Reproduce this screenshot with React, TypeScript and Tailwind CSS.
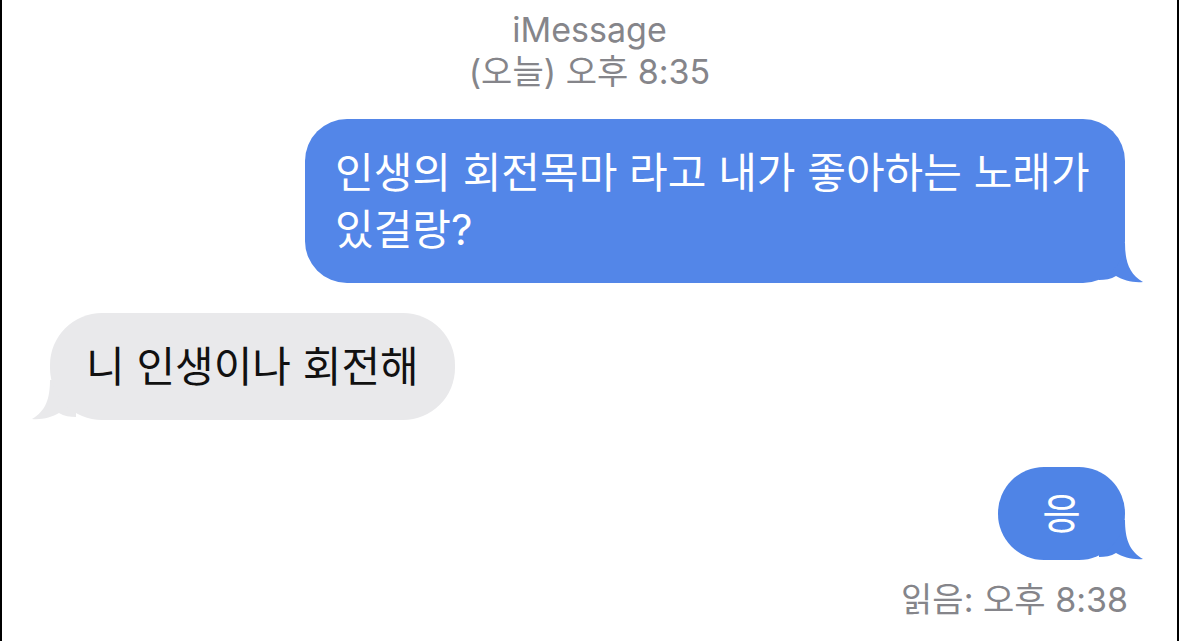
const font = { fontFamily: '"Inter", "Noto Sans CJK KR", sans-serif' };

const Tail = ({ side, color }: { side: "left" | "right"; color: string }) => (
  <svg
    width="44"
    height="40"
    viewBox="0 0 44 40"
    className={
      side === "right"
        ? "absolute -right-[18px] bottom-0"
        : "absolute -left-[18px] bottom-0 -scale-x-100"
    }
  >
    <path
      d="M0 0 L26 0 C26 18 30 31 44 39 C34 40 24 37 17 33 C12 36 6 37 0 37 Z"
      fill={color}
    />
  </svg>
);

export default function App() {
  return (
    <div
      className="w-full h-[641px] bg-white border-x-2 border-black flex flex-col overflow-hidden"
      style={font}
    >
      <div className="flex flex-col items-center pt-[9px] text-[34px] leading-[42px] text-[#85858a]">
        <span>iMessage</span>
        <span>(오늘) 오후 8:35</span>
      </div>

      <div className="flex flex-col pl-12 pr-[52px] pt-[26px]">
        <div className="self-end relative">
          <div className="relative z-10 bg-[#5386e8] text-white rounded-[42px] w-[820px] pl-[30px] pt-[25px] pb-[25px] text-[42px] leading-[57px] whitespace-nowrap">
            인생의 회전목마 라고 내가 좋아하는 노래가
            <br />
            있걸랑?
          </div>
          <Tail side="right" color="#5386e8" />
        </div>

        <div className="self-start relative mt-[30px]">
          <div className="relative z-10 bg-[#e9e9eb] text-[#111] rounded-[52px] w-[405px] pl-[36px] pt-[25px] pb-[25px] text-[42px] leading-[57px] whitespace-nowrap">
            니 인생이나 회전해
          </div>
          <Tail side="left" color="#e9e9eb" />
        </div>

        <div className="self-end relative mt-[47px]">
          <div className="relative z-10 bg-[#4f84e6] text-white rounded-[46px] w-[127px] h-[93px] flex items-center justify-center text-[42px]">
            응
          </div>
          <Tail side="right" color="#4f84e6" />
        </div>

        <div className="self-end mt-[20px] -mr-[3px] text-[34px] leading-[40px] text-[#85858a]">
          읽음: 오후 8:38
        </div>
      </div>
    </div>
  );
}
